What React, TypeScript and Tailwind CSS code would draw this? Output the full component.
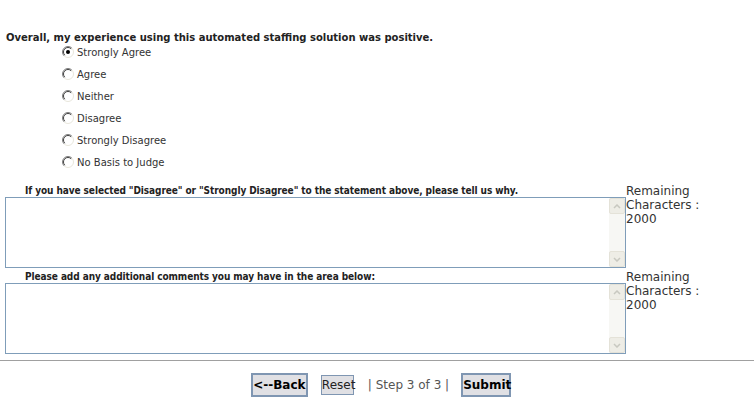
import React, { useState } from 'react';

const options = ['Strongly Agree', 'Agree', 'Neither', 'Disagree', 'Strongly Disagree', 'No Basis to Judge'];

const Radio: React.FC<{ checked: boolean }> = ({ checked }) => (
  <svg width="12" height="12" viewBox="0 0 12 12" className="shrink-0">
    <circle cx="6" cy="6" r="5.5" fill="#fff" />
    <path d="M2.1 9.9 A5.5 5.5 0 0 1 9.9 2.1" fill="none" stroke="#808080" strokeWidth="1" />
    <path d="M2.8 9.2 A4.5 4.5 0 0 1 9.2 2.8" fill="none" stroke="#404040" strokeWidth="1" />
    <path d="M9.9 2.1 A5.5 5.5 0 0 1 2.1 9.9" fill="none" stroke="#e8e6dc" strokeWidth="1" />
    {checked && <circle cx="6" cy="6" r="2" fill="#000" />}
  </svg>
);

const ScrollBox: React.FC = () => (
  <div className="flex h-[71px] w-[621px] border border-[#7f9db9] bg-white">
    <div className="flex-1" />
    <div className="flex w-[16px] flex-col justify-between bg-[#f7f7f4]">
      <div className="flex h-[16px] items-center justify-center rounded-[2px] border border-[#e4e2d8] bg-[#eeede6]">
        <svg width="8" height="5" viewBox="0 0 8 5">
          <path d="M1 4 L4 1 L7 4" fill="none" stroke="#c8c8c0" strokeWidth="1.5" />
        </svg>
      </div>
      <div className="flex h-[16px] items-center justify-center rounded-[2px] border border-[#e4e2d8] bg-[#eeede6]">
        <svg width="8" height="5" viewBox="0 0 8 5">
          <path d="M1 1 L4 4 L7 1" fill="none" stroke="#c8c8c0" strokeWidth="1.5" />
        </svg>
      </div>
    </div>
  </div>
);

const CommentSection: React.FC<{ label: string }> = ({ label }) => (
  <div className="flex pl-[5px]">
    <div className="flex flex-col">
      <div className="h-[13px] pl-[20px] font-['DejaVu_Sans_Condensed','DejaVu_Sans',sans-serif] text-[10px] leading-[13px] font-bold tracking-[-0.08px] text-[#222]">
        {label}
      </div>
      <ScrollBox />
    </div>
    <div className="text-[12px] leading-[14px] text-[#333]">
      Remaining
      <br />
      Characters :
      <br />
      2000
    </div>
  </div>
);

export default function App() {
  const [choice, setChoice] = useState(0);

  return (
    <div className="h-[409px] w-[754px] bg-white font-['DejaVu_Sans',sans-serif] text-[#222]">
      <div className="pt-[31px] pl-[6px] text-[10px] leading-[14px] font-bold">
        Overall, my experience using this automated staffing solution was positive.
      </div>
      <div className="flex flex-col gap-[8px] pl-[62px]">
        {options.map((opt, i) => (
          <div key={opt} className="flex h-[14px] cursor-pointer items-center gap-[3px] text-[10px] text-[#333]" onClick={() => setChoice(i)}>
            <Radio checked={choice === i} />
            <span>{opt}</span>
          </div>
        ))}
      </div>
      <div className="mt-[15px] flex flex-col gap-[2px]">
        <CommentSection label={'If you have selected "Disagree" or "Strongly Disagree" to the statement above, please tell us why.'} />
        <CommentSection label="Please add any additional comments you may have in the area below:" />
      </div>
      <div className="mt-[6px] h-[1px] bg-[#a0a0a0]" />
      <div className="mt-[12px] flex items-center justify-center pl-[8px]">
        <button className="h-[24px] w-[57px] border-2 border-[#7f96b2] bg-[#e0e0e4] text-[12px] font-bold whitespace-nowrap text-black">&lt;--Back</button>
        <button className="ml-[13px] h-[20px] w-[33px] border border-[#7f96b2] bg-[#e0e0e4] text-[12px] whitespace-nowrap text-[#222]">Reset</button>
        <span className="ml-[14px] text-[12px] whitespace-nowrap text-[#555]">| Step 3 of 3 |</span>
        <button className="ml-[12px] h-[24px] w-[50px] border-2 border-[#7f96b2] bg-[#e0e0e4] text-[12px] font-bold whitespace-nowrap text-black">Submit</button>
      </div>
    </div>
  );
}
